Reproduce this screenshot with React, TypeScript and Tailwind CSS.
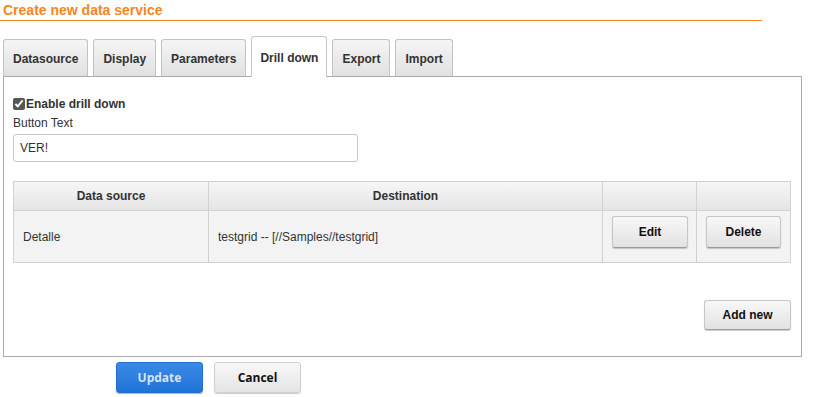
import { useState } from "react";

const tabs = ["Datasource", "Display", "Parameters", "Drill down", "Export", "Import"];

const GrayButton = ({ children, className }: { children: string; className?: string }) => (
  <button
    type="button"
    className={
      "rounded-[3px] border border-[#c6c6c6] border-b-[#9a9a9a] bg-gradient-to-b from-[#f8f8f8] to-[#e2e2e2] text-[12px] font-bold text-[#111] shadow-[0_1px_1px_rgba(0,0,0,0.2)] " +
      (className ?? "")
    }
  >
    {children}
  </button>
);

const App = () => {
  const [enabled, setEnabled] = useState(true);
  const [text, setText] = useState("VER!");

  return (
    <div className="h-[397px] w-[830px] bg-white font-['Liberation_Sans',Arial,sans-serif] text-[12px] text-[#333]">
      <div className="w-[762px] border-b border-[#f7861c] pb-[2px] pl-[3px] pt-[3px]">
        <h1 className="text-[14px] font-bold leading-[15px] text-[#f7861c]">Create new data service</h1>
      </div>

      <div className="ml-[3px] mt-[15px] flex items-end gap-[5px]">
        {tabs.map((t) =>
          t === "Drill down" ? (
            <div
              key={t}
              className="relative z-10 -mb-px flex h-[41px] w-[76px] items-center justify-center rounded-t-[3px] border border-b-0 border-[#c6c6c6] bg-white pt-[1px] font-bold"
            >
              {t}
            </div>
          ) : (
            <div
              key={t}
              className="flex h-[37px] items-center justify-center rounded-t-[3px] border border-b-0 border-[#c3c3c3] bg-gradient-to-b from-[#f5f5f5] to-[#e1e1e1] px-[9px] pt-[1px] font-bold"
            >
              {t}
            </div>
          )
        )}
      </div>

      <div className="ml-[3px] h-[281px] w-[799px] border border-[#aaaaaa] pl-[9px] pr-[10px] pt-[19px]">
        <label className="flex h-[16px] items-center font-bold">
          <input
            type="checkbox"
            checked={enabled}
            onChange={(e) => setEnabled(e.target.checked)}
            className="m-0 mr-px h-[12px] w-[12px] accent-[#555]"
          />
          Enable drill down
        </label>
        <div className="mt-[4px] leading-[14px]">Button Text</div>
        <input
          value={text}
          onChange={(e) => setText(e.target.value)}
          className="mt-[4px] h-[28px] w-[345px] rounded-[3px] border border-[#c8c8c8] px-[6px] text-[12px] text-[#333] outline-none"
        />

        <table className="mt-[19px] w-[778px] border-collapse">
          <thead>
            <tr className="h-[29px] bg-gradient-to-b from-[#f6f6f6] to-[#e4e4e4]">
              <th className="w-[195px] border border-[#d2d2d2] font-bold">Data source</th>
              <th className="w-[394px] border border-[#d2d2d2] font-bold">Destination</th>
              <th className="w-[94px] border border-[#d2d2d2]"></th>
              <th className="border border-[#d2d2d2]"></th>
            </tr>
          </thead>
          <tbody>
            <tr className="h-[52px] bg-[#f3f3f3]">
              <td className="border border-[#d2d2d2] pl-[9px]">Detalle</td>
              <td className="border border-[#d2d2d2] pl-[9px]">testgrid -- [//Samples//testgrid]</td>
              <td className="border border-[#d2d2d2] pl-[9px] pt-[5px] align-top">
                <GrayButton className="h-[32px] w-[76px]">Edit</GrayButton>
              </td>
              <td className="border border-[#d2d2d2] pl-[9px] pt-[5px] align-top">
                <GrayButton className="h-[32px] w-[75px]">Delete</GrayButton>
              </td>
            </tr>
          </tbody>
        </table>

        <div className="mt-[37px] flex justify-end">
          <GrayButton className="h-[30px] w-[87px]">Add new</GrayButton>
        </div>
      </div>

      <div className="ml-[116px] mt-[5px] flex gap-[11px] font-['Open_Sans',sans-serif]">
        <button
          type="button"
          className="h-[31px] w-[87px] rounded-[3px] border border-[#1f6fd0] bg-gradient-to-b from-[#3a8ae6] to-[#1f73d8] text-[12px] font-bold text-[#d6e4f4] shadow-[0_1px_1px_rgba(0,0,0,0.3)]"
        >
          Update
        </button>
        <button
          type="button"
          className="h-[31px] w-[87px] rounded-[3px] border border-[#d0d0d0] bg-gradient-to-b from-[#f8f8f8] to-[#e4e4e4] text-[12px] font-bold text-[#111] shadow-[0_1px_1px_rgba(0,0,0,0.2)]"
        >
          Cancel
        </button>
      </div>
    </div>
  );
};

export default App;
